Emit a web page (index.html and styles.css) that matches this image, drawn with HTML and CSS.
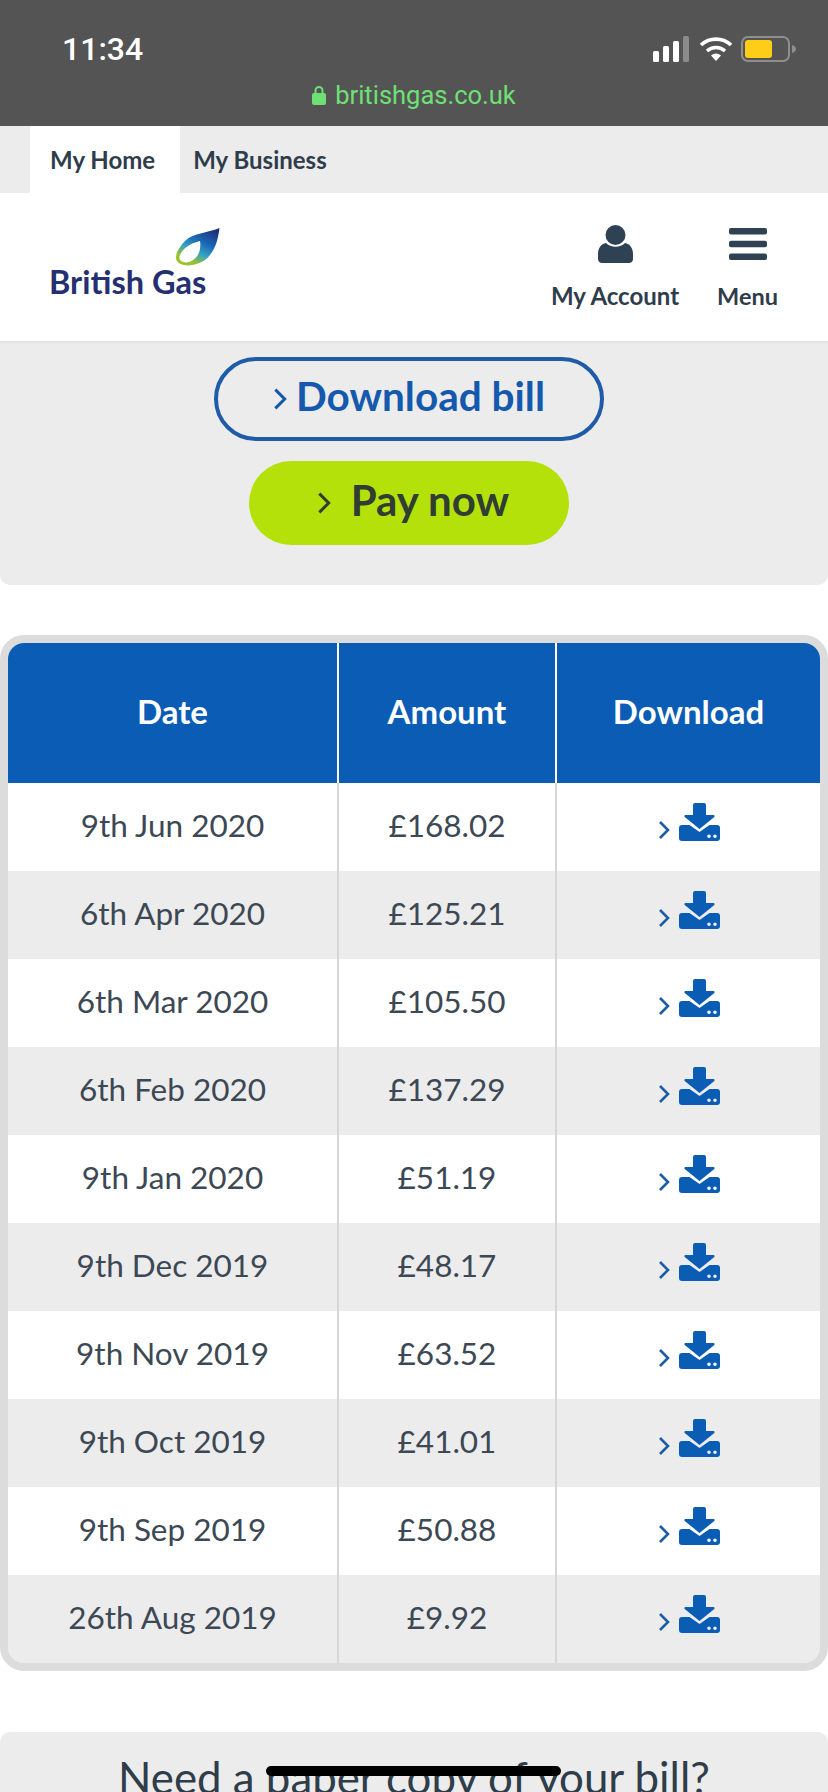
FILE: index.html
```html
<!DOCTYPE html>
<html lang="en">
<head>
<meta charset="utf-8">
<title>British Gas bills</title>
<link rel="stylesheet" href="styles.css">
</head>
<body>
<svg class="defs" width="0" height="0" aria-hidden="true">
  <defs>
    <symbol id="dl" viewBox="0 0 41 38">
      <path d="M16 0h9a2 2 0 0 1 2 2v10h7.500c1 0 1.500 1.200.8 1.900L20.500 26 5.700 13.900c-.7-.7-.2-1.900.8-1.900H14V2a2 2 0 0 1 2-2z"/>
      <path fill-rule="evenodd" d="M3 22h7.500l10 7 10-7H38a3 3 0 0 1 3 3v10a3 3 0 0 1-3 3H3a3 3 0 0 1-3-3V25a3 3 0 0 1 3-3zm27 9.500a1.800 1.800 0 1 0 0 3.600 1.800 1.800 0 0 0 0-3.600zm6 0a1.800 1.800 0 1 0 0 3.600 1.800 1.800 0 0 0 0-3.600z"/>
    </symbol>
    <symbol id="chev" viewBox="0 0 12 20">
      <path d="M2 2l8 8-8 8" fill="none" stroke="currentColor" stroke-width="2.600"/>
    </symbol>
    <linearGradient id="flame" x1=".8" y1="0" x2=".2" y2="1">
      <stop offset="0" stop-color="#1d2f7a"/>
      <stop offset=".38" stop-color="#1b6cb8"/>
      <stop offset=".62" stop-color="#3aa5c0"/>
      <stop offset=".85" stop-color="#9bc22c"/>
    </linearGradient>
  </defs>
</svg>

<div class="status">
  <div class="status-top">
    <span class="time">11:34</span>
    <span class="sys">
      <svg class="signal" viewBox="0 0 36 26"><rect x="0" y="15" width="6" height="11" rx="1.500" fill="#fff"/><rect x="10" y="10" width="6" height="16" rx="1.500" fill="#fff"/><rect x="20" y="5" width="6" height="21" rx="1.500" fill="#fff"/><rect x="30" y="0" width="6" height="26" rx="1.500" fill="#8b8b8b"/></svg>
      <svg class="wifi" viewBox="0 0 32 24"><path d="M1 8a22 22 0 0 1 30 0" fill="none" stroke="#fff" stroke-width="3.600"/><path d="M7 14a13.500 13.500 0 0 1 18 0" fill="none" stroke="#fff" stroke-width="3.600"/><path d="M11 18.500a7.500 7.500 0 0 1 10 0L16 24z" fill="#fff"/></svg>
      <svg class="batt" viewBox="0 0 56 26"><rect x="1" y="1" width="47" height="24" rx="6" fill="none" stroke="#8e8e8e" stroke-width="2"/><rect x="4" y="4" width="27" height="18" rx="3" fill="#fdcd17"/><path d="M51 9c3 1 4 2.500 4 4s-1 3-4 4z" fill="#8e8e8e"/></svg>
    </span>
  </div>
  <div class="url">
    <svg class="lock" viewBox="0 0 14 20"><path d="M3.500 9V5.500a3.500 3.500 0 0 1 7 0V9" fill="none" stroke="#6fe075" stroke-width="2"/><rect y="8" width="14" height="12" rx="2" fill="#6fe075"/></svg>
    <span>britishgas.co.uk</span>
  </div>
</div>

<nav class="tabs">
  <a class="tab tab-on">My Home</a>
  <a class="tab">My Business</a>
</nav>

<header class="head">
  <div class="logo">
    <svg class="flame" viewBox="0 0 45 38"><path fill="url(#flame)" fill-rule="evenodd" d="M44.500 0C32 5 18 5 10 13 3 20-1 29 2 33c4 6 18 6 28-1C40 24 43 12 44.500 0zM25 13C16 15 8 20 5 27c-2 4 1 7 6 7.500 6 0 12-5.500 13.500-11.500 1-4 1-7 .5-10z"/></svg>
    <div class="logo-text">British Gas</div>
  </div>
  <div class="head-links">
    <a class="hlink">
      <svg class="hicon user" viewBox="0 0 35 38"><circle cx="17.500" cy="10" r="10" fill="#2f4253"/><path d="M8 18c5 5 14 5 19 0 5 1 8 5 8 11v5c0 2.500-2 4-4 4H4c-2 0-4-1.500-4-4v-5c0-6 3-10 8-11z" fill="#2f4253"/></svg>
      <span>My Account</span>
    </a>
    <a class="hlink">
      <svg class="hicon burger" viewBox="0 0 38 32"><rect width="38" height="6.500" rx="2" fill="#2f4253"/><rect y="12.700" width="38" height="6.500" rx="2" fill="#2f4253"/><rect y="25.500" width="38" height="6.500" rx="2" fill="#2f4253"/></svg>
      <span>Menu</span>
    </a>
  </div>
</header>

<section class="actions">
  <a class="btn btn-line"><svg class="bchev"><use href="#chev"/></svg><span>Download bill</span></a>
  <a class="btn btn-pay"><svg class="bchev"><use href="#chev"/></svg><span>Pay now</span></a>
</section>

<div class="table-wrap">
  <table class="bills">
    <colgroup><col class="c1"><col class="c2"><col class="c3"></colgroup>
    <thead><tr><th>Date</th><th>Amount</th><th>Download</th></tr></thead>
    <tbody>
      <tr><td>9th Jun 2020</td><td>£168.02</td><td><span class="dl"><svg class="dchev"><use href="#chev"/></svg><svg class="dicon"><use href="#dl"/></svg></span></td></tr>
      <tr><td>6th Apr 2020</td><td>£125.21</td><td><span class="dl"><svg class="dchev"><use href="#chev"/></svg><svg class="dicon"><use href="#dl"/></svg></span></td></tr>
      <tr><td>6th Mar 2020</td><td>£105.50</td><td><span class="dl"><svg class="dchev"><use href="#chev"/></svg><svg class="dicon"><use href="#dl"/></svg></span></td></tr>
      <tr><td>6th Feb 2020</td><td>£137.29</td><td><span class="dl"><svg class="dchev"><use href="#chev"/></svg><svg class="dicon"><use href="#dl"/></svg></span></td></tr>
      <tr><td>9th Jan 2020</td><td>£51.19</td><td><span class="dl"><svg class="dchev"><use href="#chev"/></svg><svg class="dicon"><use href="#dl"/></svg></span></td></tr>
      <tr><td>9th Dec 2019</td><td>£48.17</td><td><span class="dl"><svg class="dchev"><use href="#chev"/></svg><svg class="dicon"><use href="#dl"/></svg></span></td></tr>
      <tr><td>9th Nov 2019</td><td>£63.52</td><td><span class="dl"><svg class="dchev"><use href="#chev"/></svg><svg class="dicon"><use href="#dl"/></svg></span></td></tr>
      <tr><td>9th Oct 2019</td><td>£41.01</td><td><span class="dl"><svg class="dchev"><use href="#chev"/></svg><svg class="dicon"><use href="#dl"/></svg></span></td></tr>
      <tr><td>9th Sep 2019</td><td>£50.88</td><td><span class="dl"><svg class="dchev"><use href="#chev"/></svg><svg class="dicon"><use href="#dl"/></svg></span></td></tr>
      <tr><td>26th Aug 2019</td><td>£9.92</td><td><span class="dl"><svg class="dchev"><use href="#chev"/></svg><svg class="dicon"><use href="#dl"/></svg></span></td></tr>
    </tbody>
  </table>
</div>

<section class="paper">
  <h2>Need a paper copy of your bill?</h2>
</section>

<div class="homebar"></div>
</body>
</html>
```

FILE: styles.css
```css
* { box-sizing: border-box; }
html, body { margin: 0; padding: 0; }
body {
  width: 828px;
  height: 1792px;
  overflow: hidden;
  position: relative;
  background: #fff;
  font-family: Lato, "Noto Sans", sans-serif;
  color: #2f3d4a;
}
.defs { position: absolute; }

/* status */
.status { height: 126px; background: #545454; padding: 29px 31px 0 62px; }
.status-top { display: flex; justify-content: space-between; align-items: center; height: 40px; }
.time { font-family: Roboto, sans-serif; font-size: 32px; font-weight: 500; color: #fff; }
.sys { display: flex; align-items: center; gap: 7px; }
.signal { width: 36px; height: 26px; display: block; }
.wifi { width: 32px; height: 24px; display: block; margin: 0 2px 0 4px; }
.batt { width: 56px; height: 26px; display: block; }
.url { display: flex; justify-content: center; align-items: center; gap: 9px; margin: 11px -31px 0 -62px; color: #6fe075; font-family: Roboto, sans-serif; font-size: 25.500px; }
.lock { width: 14px; height: 20px; display: block; }

/* tabs */
.tabs { height: 67px; background: #ececec; display: flex; padding-left: 30px; }
.tab { display: flex; align-items: center; padding: 0 13px; font-size: 24px; font-weight: 700; color: #2f3d4a; }
.tab-on { background: #fff; padding: 0 25px 0 20px; }

/* header */
.head { height: 150px; display: flex; justify-content: space-between; padding: 0 50px 0 49px; border-bottom: 2px solid #e4e4e4; }
.logo { width: 172px; padding-top: 35px; }
.flame { width: 45px; height: 38px; display: block; margin-left: 126px; }
.logo-text { font-size: 32.500px; font-weight: 700; color: #24306f; line-height: 32px; white-space: nowrap; }
.head-links { display: flex; gap: 38px; padding-top: 32px; }
.hlink { display: flex; flex-direction: column; align-items: center; font-size: 24px; font-weight: 700; color: #2f3d4a; }
.hicon { display: block; }
.user { width: 35px; height: 38px; }
.burger { width: 38px; height: 32px; margin-top: 3px; margin-bottom: 3px; }
.hlink span { margin-top: 18px; line-height: 30px; }
.hlink:last-child { font-size: 23.500px; }

/* actions */
.actions { height: 242px; background: #ececec; border-radius: 0 0 10px 10px; display: flex; flex-direction: column; align-items: center; padding: 14px 10px 0 0; gap: 20px; }
.btn { display: flex; align-items: center; justify-content: center; height: 84px; border-radius: 42px; font-weight: 700; line-height: 50px; }
.btn span { margin-bottom: 6px; }
.btn-line { width: 390px; border: 4px solid #1e5ca8; color: #1459ad; gap: 9px; font-size: 40.500px; }
.btn-pay { width: 320px; background: #b5e10a; color: #2f3d33; gap: 20px; font-size: 42px; padding-left: 8px; }
.bchev { width: 14px; height: 24px; display: block; }

/* table */
.table-wrap { margin-top: 50px; border: 8px solid #dcdcdc; border-radius: 24px; background: #ececec; overflow: hidden; height: 1036px; }
.bills { width: 812px; border-collapse: collapse; table-layout: fixed; }
.c1 { width: 330px; }
.c2 { width: 218px; }
.c3 { width: 264px; }
.bills th { height: 140px; background: #0a5cb4; color: #fff; font-size: 33px; font-weight: 700; border-left: 2px solid #fff; padding: 0 0 4px; }
.bills th:first-child, .bills td:first-child { border-left: 0; }
.bills td { height: 88px; padding: 0 0 4px; text-align: center; font-size: 31.500px; color: #3c4854; border-left: 2px solid #d6d6d6; }
.bills tbody tr:nth-child(odd) { background: #fff; }
.bills tbody tr:nth-child(even) { background: #ececec; }
.dl { display: flex; justify-content: center; align-items: flex-end; gap: 9px; color: #0a5cb4; margin-bottom: 6px; }
.dchev { width: 12px; height: 22px; display: block; color: #1e5ca8; margin-bottom: 0; }
.dicon { width: 41px; height: 38px; display: block; fill: #0a5cb4; }

/* paper: the screenshot ends part way through this heading */
.paper { margin-top: 61px; height: 60px; background: #ececec; border-radius: 10px 10px 0 0; text-align: center; padding-top: 18px; }
.paper h2 { margin: 0; font-size: 43.800px; font-weight: 400; color: #2f3d4a; line-height: 54px; white-space: nowrap; }

.homebar { position: absolute; left: 266px; top: 1766px; width: 295px; height: 10px; border-radius: 5px; background: #000; }
```
